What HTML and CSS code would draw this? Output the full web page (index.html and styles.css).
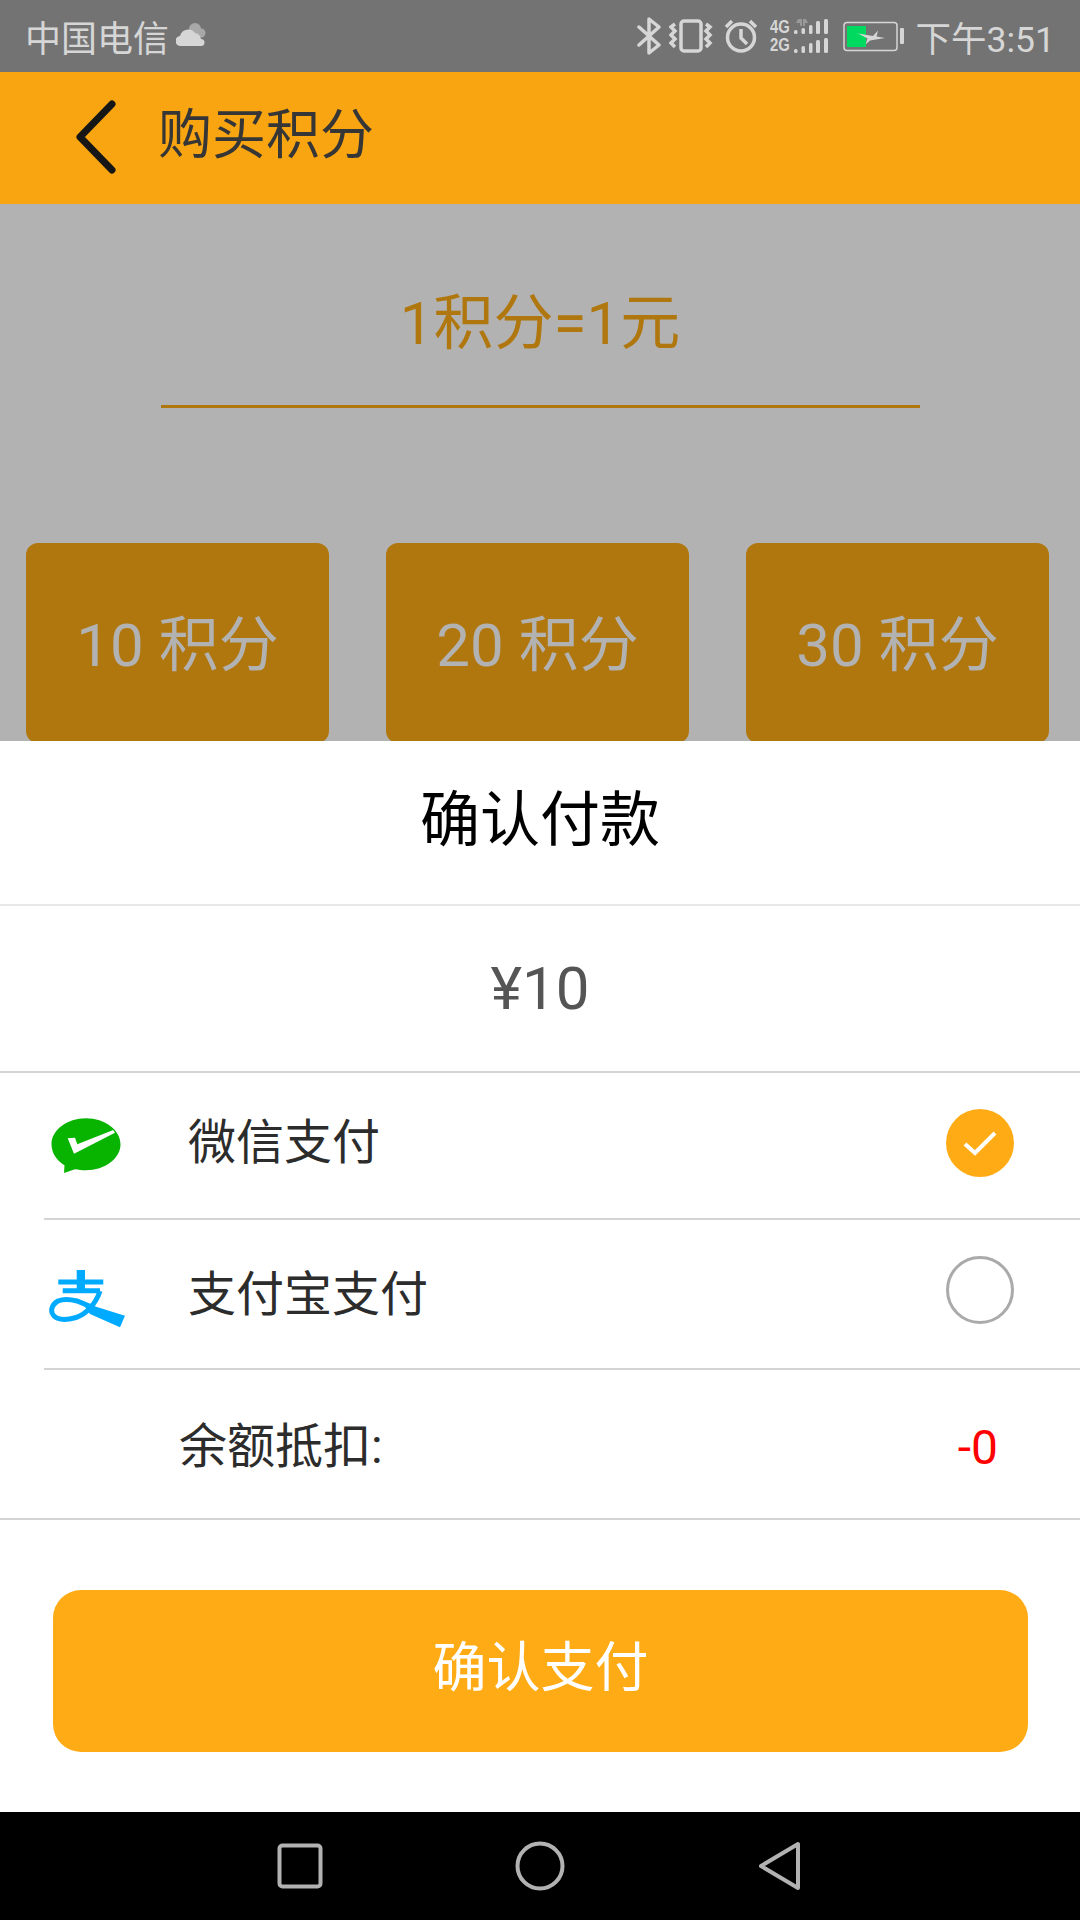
FILE: index.html
```html
<!DOCTYPE html>
<html lang="zh">
<head>
<meta charset="utf-8">
<title>购买积分</title>
<link rel="stylesheet" href="styles.css">
</head>
<body>
<div class="page">
  <div class="status">
    <div class="status-left">
      <span class="carrier">中国电信</span>
      <svg class="ic-cloud" viewBox="0 0 30 24"><circle cx="19" cy="6" r="6" fill="#a8a8a8"/><circle cx="25" cy="10" r="4.500" fill="#a8a8a8"/><path d="M5 23a5 5 0 0 1-1-10 8.500 8.500 0 0 1 15-3 6.500 6.500 0 0 1 6 6 3.500 3.500 0 0 1 0 7z" fill="#d6d6d6"/></svg>
    </div>
    <div class="status-right">
      <svg class="ic-bt" viewBox="0 0 24 38"><path d="M2 10l20 18-10 8V2l10 8L2 28" fill="none" stroke="#d6d6d6" stroke-width="3.500" stroke-linejoin="round" stroke-linecap="round"/></svg>
      <svg class="ic-vib" viewBox="0 0 44 34"><rect x="12" y="2" width="20" height="30" rx="3" fill="none" stroke="#d6d6d6" stroke-width="3.500"/><path d="M6 5L2 8l4 4-4 4 4 4-4 4 4 4M37 5l4 3-4 4 4 4-4 4 4 4-4 4" fill="none" stroke="#d6d6d6" stroke-width="3.500"/></svg>
      <svg class="ic-alarm" viewBox="0 0 34 34"><circle cx="17" cy="18.500" r="13.500" fill="none" stroke="#d6d6d6" stroke-width="3.500"/><path d="M17 10v9l6 6M2 8l6-6M32 8l-6-6" fill="none" stroke="#d6d6d6" stroke-width="3.500"/></svg>
      <div class="net-wrap">
        <div class="net-labels"><span class="net">4G</span><span class="net">2G</span></div>
        <svg class="ic-signal" viewBox="24 0 36 36">
          <g fill="#d6d6d6"><rect x="24" y="12" width="3.500" height="4" rx="1.500"/><rect x="31.500" y="10" width="3.500" height="6" rx="1.500"/><rect x="39" y="7" width="3.500" height="9" rx="1.500"/><rect x="46" y="3" width="4" height="13" rx="1.500"/><rect x="54" y="1" width="4" height="15" rx="1.500"/>
          <rect x="24" y="31" width="3.500" height="4" rx="1.500"/><rect x="31.500" y="28" width="3.500" height="7" rx="1.500"/><rect x="39" y="25" width="3.500" height="10" rx="1.500"/><rect x="46" y="22" width="4" height="13" rx="1.500"/><rect x="54" y="20" width="4" height="15" rx="1.500"/></g>
          <path d="M28 1h4v7h-2v-3h-4zM33 1h3l2 4h-3v3h-2z" fill="#999"/>
        </svg>
      </div>
      <svg class="ic-batt" viewBox="0 0 62 32"><rect x="1" y="1.500" width="53" height="28" rx="3" fill="none" stroke="#d6d6d6" stroke-width="1.500"/><rect x="4" y="5" width="19" height="21" fill="#00d95f"/><path d="M15 12.500L30 15 35 9.500 33.500 15.500 42 17 27 19.500 22.500 23.500 24.500 17.500z" fill="#d6d6d6"/><rect x="57" y="7" width="4" height="16" rx="1" fill="#d6d6d6"/></svg>
      <span class="clock">下午3:51</span>
    </div>
  </div>

  <header class="topbar">
    <svg class="ic-back" viewBox="0 0 44 76"><path d="M38 4L6 37l32 33" fill="none" stroke="#161616" stroke-width="7" stroke-linecap="round" stroke-linejoin="round"/></svg>
    <h1 class="topbar-title">购买积分</h1>
  </header>

  <section class="behind">
    <div class="rate">1积分=1元</div>
    <div class="options">
      <div class="option">10 积分</div>
      <div class="option">20 积分</div>
      <div class="option">30 积分</div>
    </div>
  </section>

  <section class="sheet">
    <div class="sheet-title"><span class="sheet-title-text">确认付款</span></div>
    <div class="amount">¥10</div>
    <div class="row row-first">
      <svg class="logo" viewBox="0 0 76 60"><path d="M36 2.300C17 2.300 1.500 14 1.500 28.300c0 11 8 18 13 21l-.5 7.700 11-3.700c3 .5 7 1 11 1 19 0 34.500-11.700 34.500-26S55 2.300 36 2.300z" fill="#09b400"/><path d="M17.700 22.300L25 21.700 27.300 28.300 63.300 14 65 16.700 24 37.700z" fill="#fff"/></svg>
      <span class="row-label">微信支付</span>
      <span class="check"><svg class="check-mark" viewBox="0 0 34 26"><path d="M2 14l10 9L32 3" fill="none" stroke="#fff" stroke-width="4"/></svg></span>
    </div>
    <div class="row row-ali">
      <svg class="logo" viewBox="0 0 80 62"><path d="M27.700 2h8.300v20h-8.300z" fill="#00aaff"/><g fill="none" stroke="#00aaff"><path d="M9.300 14h45M13.700 22.700H51" stroke-width="5"/><path d="M51 23C47 35 38 46 27 49.500 18 52 9 52 5 48 1 44 2 37 9 33c5-2 11-2 19 0l17 7" stroke-width="5"/></g><path d="M32.700 34.300L76 47.700 71 59.300 41 46z" fill="#00aaff"/></svg>
      <span class="row-label">支付宝支付</span>
      <span class="radio"></span>
    </div>
    <div class="row row-balance">
      <span class="balance-label">余额抵扣:</span>
      <span class="balance-value">-0</span>
    </div>
    <div class="pay"><span class="pay-text">确认支付</span></div>
  </section>

  <nav class="navbar">
    <svg class="ic-square" viewBox="0 0 46 46"><rect x="2.500" y="2.500" width="41" height="41" rx="3" fill="none" stroke="#b2b2b2" stroke-width="4"/></svg>
    <svg class="ic-circle" viewBox="0 0 50 50"><circle cx="25" cy="25" r="22.500" fill="none" stroke="#b2b2b2" stroke-width="4"/></svg>
    <svg class="ic-tri" viewBox="0 0 42 50"><path d="M39 3v44L2 25z" fill="none" stroke="#b2b2b2" stroke-width="4" stroke-linejoin="round"/></svg>
  </nav>
</div>
</body>
</html>
```
FILE: styles.css
```css
* { box-sizing: border-box; margin: 0; padding: 0; }
html, body { background: #fff; }
body { font-family: Roboto, "Noto Sans CJK SC", sans-serif; }
.page { width: 1080px; height: 1920px; display: flex; flex-direction: column; overflow: hidden; }

.status { height: 72px; background: #737373; color: #d6d6d6; display: flex; justify-content: space-between; align-items: center; padding: 0 25px; font-size: 36px; }
.status-left, .status-right { display: flex; align-items: center; }
.ic-cloud { width: 30px; height: 24px; margin-left: 7px; margin-top: -2px; }
.ic-bt { width: 24px; height: 38px; }
.ic-vib { width: 44px; height: 34px; margin-left: 8px; }
.ic-alarm { width: 34px; height: 34px; margin-left: 11px; }
.net-wrap { width: 60px; height: 36px; margin-left: 12px; display: flex; justify-content: space-between; }
.net-labels { width: 22px; height: 36px; display: flex; flex-direction: column; }
.net { display: block; height: 18px; font: 700 19px/18px "Liberation Sans", sans-serif; color: #d6d6d6; transform: scaleX(.78); transform-origin: left center; }
.ic-signal { width: 36px; height: 36px; }
.ic-batt { width: 62px; height: 32px; margin-left: 13px; margin-top: 2px; }
.clock { margin-left: 11px; font-size: 35.500px; }

.topbar { height: 132px; background: #f8a511; display: flex; align-items: center; padding-left: 74px; }
.ic-back { width: 44px; height: 76px; }
.topbar-title { font-size: 54px; font-weight: 400; color: #363636; margin-left: 40px; margin-top: -15px; }

.behind { height: 537px; background: #b2b2b2; overflow: hidden; display: flex; flex-direction: column; flex: none; }
.rate { width: 759px; height: 204px; flex: none; margin: 0 auto; padding-top: 84px; border-bottom: 3px solid #b0770e; text-align: center; font-size: 60px; line-height: 72px; color: #b0770e; }
.options { display: flex; justify-content: space-between; padding: 135px 31px 0 26px; }
.option { width: 303px; height: 200px; flex: none; padding-bottom: 8px; background: #b0770e; border-radius: 12px; color: #b2b2b2; font-size: 60px; display: flex; align-items: center; justify-content: center; }

.sheet { flex: 1; background: #fff; display: flex; flex-direction: column; }
.sheet-title { height: 165px; flex: none; display: flex; align-items: center; justify-content: center; font-size: 60px; color: #000; border-bottom: 2px solid #e8e8e8; }
.sheet-title-text { margin-top: -16px; }
.amount { height: 167px; flex: none; display: flex; align-items: center; justify-content: center; font-size: 60px; color: #555; border-bottom: 2px solid #d4d4d4; }
.row { display: flex; align-items: center; flex: none; }
.row-first { height: 147px; margin-left: 44px; padding-right: 66px; border-bottom: 2px solid #d4d4d4; }
.row-ali { height: 150px; margin-left: 44px; padding-right: 66px; border-bottom: 2px solid #d4d4d4; }
.row-balance { height: 150px; padding: 0 82px 0 179px; justify-content: space-between; border-bottom: 2px solid #d4d4d4; }
.logo { width: 76px; height: 60px; flex: none; margin-left: 6px; }
.row-ali .logo { width: 80px; height: 62px; margin-left: 5px; margin-top: 10px; }
.row-label { font-size: 48px; color: #2c2c2c; margin-left: 62px; margin-top: -15px; }
.row-ali .row-label { margin-left: 59px; margin-top: -8px; }
.check, .radio { width: 68px; height: 68px; border-radius: 50%; margin-left: auto; display: flex; align-items: center; justify-content: center; }
.check { background: #ffab15; margin-top: -5px; }
.check-mark { width: 34px; height: 26px; }
.radio { border: 3px solid #aaa; margin-top: -9px; }
.balance-label { font-size: 48px; color: #2c2c2c; margin-top: -5px; }
.balance-value { font-size: 48px; color: #f00; margin-top: 6px; }
.pay { width: 975px; height: 162px; flex: none; margin: 70px 0 0 53px; background: #ffab15; border-radius: 28px; color: #fff; font-size: 54px; display: flex; align-items: center; justify-content: center; }
.pay-text { margin-top: -15px; }

.navbar { height: 108px; flex: none; background: #000; display: flex; align-items: center; padding: 0 279px 0 277px; justify-content: space-between; }
.ic-square { width: 46px; height: 46px; }
.ic-circle { width: 50px; height: 50px; margin-left: -2px; }
.ic-tri { width: 42px; height: 50px; }
```
